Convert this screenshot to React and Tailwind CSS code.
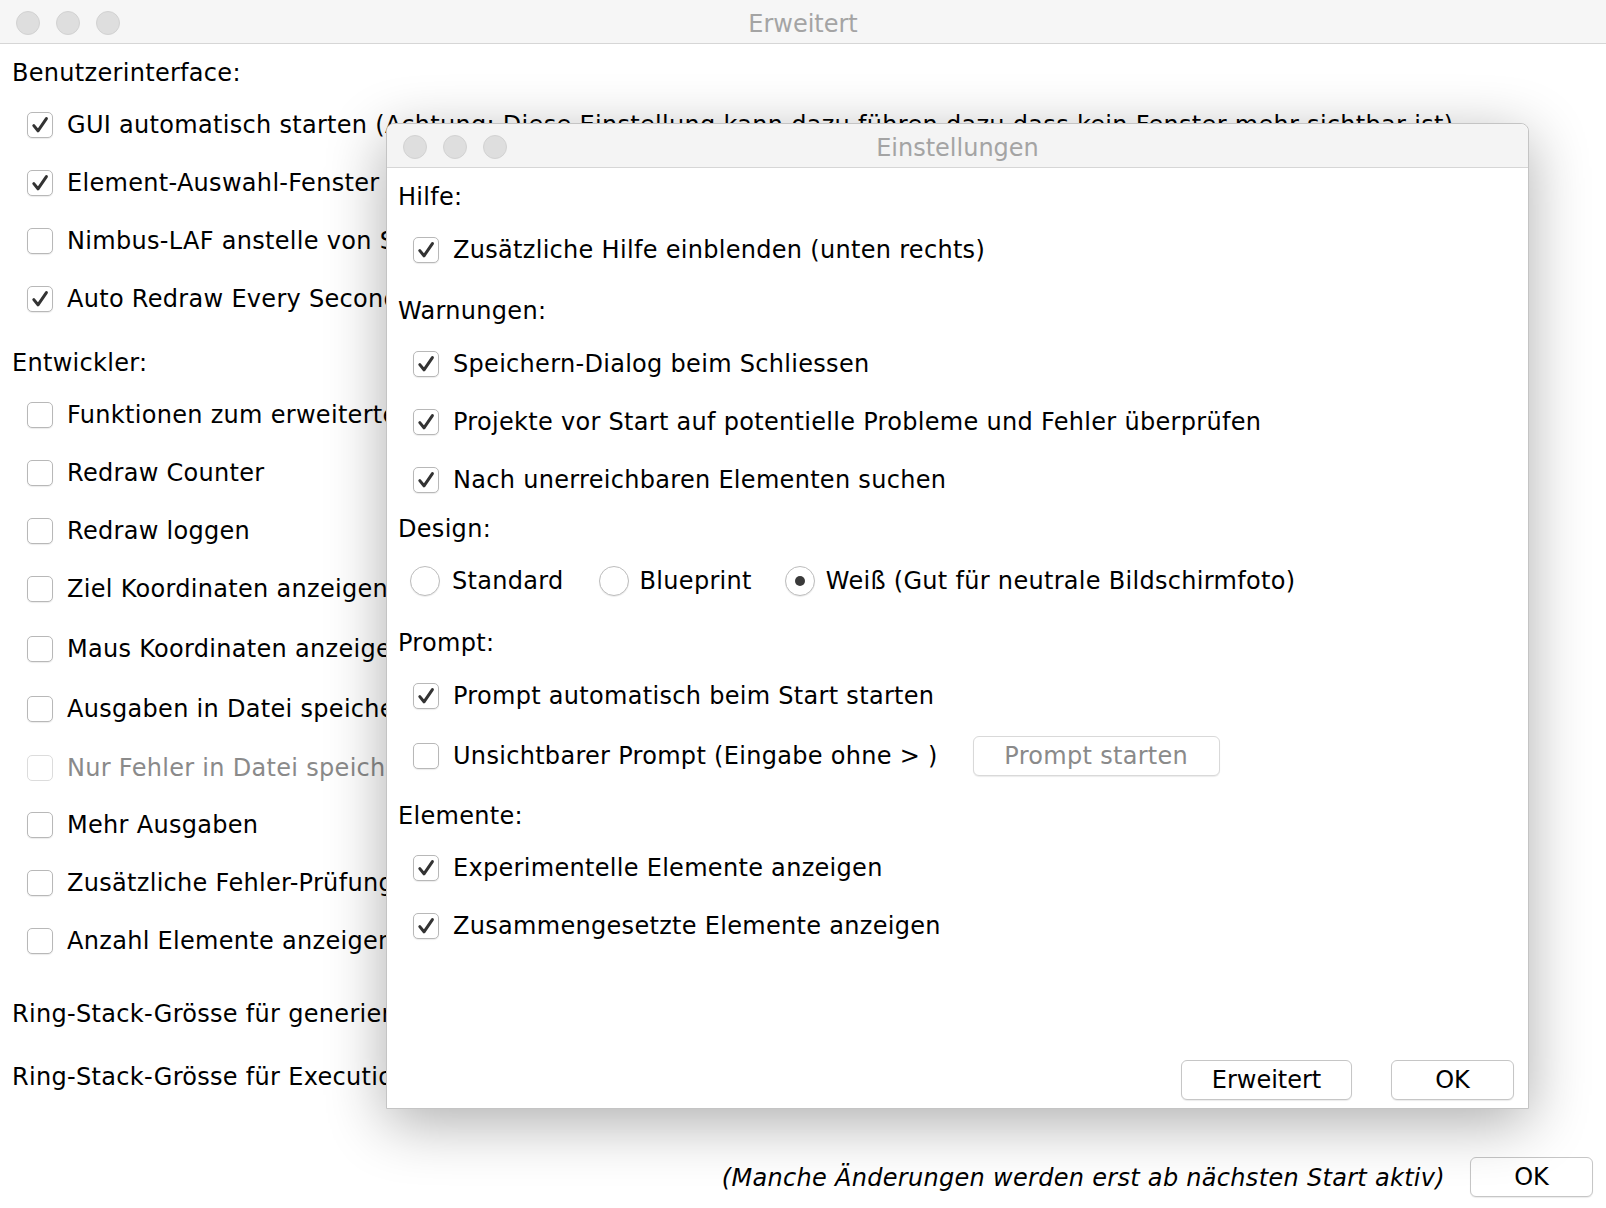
import React from "react";

function Check({ checked, disabled }) {
  return (
    <span
      className={
        disabled
          ? "w-[26px] h-[26px] rounded-[5px] border border-[#dcdcdc] bg-white flex items-center justify-center shrink-0"
          : "w-[26px] h-[26px] rounded-[5px] border border-[#b8b8b8] bg-white shadow-[0_1px_1px_rgba(0,0,0,0.08)] flex items-center justify-center shrink-0"
      }
    >
      {checked && (
        <svg width="26" height="26" viewBox="0 0 26 26" className="-m-px">
          <path
            d="M6.8 13.6 L11 18.8 L19.4 6.6"
            fill="none"
            stroke="#333333"
            strokeWidth="3"
            strokeLinecap="round"
            strokeLinejoin="round"
          />
        </svg>
      )}
    </span>
  );
}

function Row({ checked, disabled, className, children }) {
  return (
    <div className={"flex items-center pl-[15px] whitespace-nowrap " + className}>
      <Check checked={checked} disabled={disabled} />
      <span className={disabled ? "ml-[14px] text-[#8a8a8a]" : "ml-[14px]"}>{children}</span>
    </div>
  );
}

function Radio({ selected }) {
  return (
    <span className="w-[30px] h-[30px] rounded-full border border-[#bdbdbd] bg-white shadow-[0_1px_1px_rgba(0,0,0,0.08)] flex items-center justify-center shrink-0">
      {selected && <span className="w-[10px] h-[10px] rounded-full bg-[#3a3a3a]" />}
    </span>
  );
}

function TitleBar({ title, rounded }) {
  return (
    <div
      className={
        rounded
          ? "relative h-[44px] shrink-0 bg-[#f4f4f4] border-b border-[#d6d6d6] rounded-t-[8px] flex items-center pl-[16px] pt-[2px] gap-[16px] tracking-normal"
          : "relative h-[44px] shrink-0 bg-[#f6f6f6] border-b border-[#d6d6d6] flex items-center pl-[16px] pt-[2px] gap-[16px] tracking-normal"
      }
    >
      <span className="w-[24px] h-[24px] rounded-full bg-[#dedede] border border-[#d2d2d2]" />
      <span className="w-[24px] h-[24px] rounded-full bg-[#dedede] border border-[#d2d2d2]" />
      <span className="w-[24px] h-[24px] rounded-full bg-[#dedede] border border-[#d2d2d2]" />
      <div className="absolute inset-0 pt-[4px] flex items-center justify-center text-[#a4a4a4] pointer-events-none">
        {title}
      </div>
    </div>
  );
}

function Btn({ className, children, gray }) {
  return (
    <div
      className={
        (gray ? "text-[#8a8a8a] border-[#d9d9d9] " : "text-black border-[#c6c6c6] ") +
        "h-[40px] bg-white border rounded-[6px] shadow-[0_1px_1px_rgba(0,0,0,0.08)] flex items-center justify-center " +
        className
      }
    >
      {children}
    </div>
  );
}

export default function App() {
  return (
    <div className="relative w-[1606px] h-[1208px] bg-white overflow-hidden font-['DejaVu_Sans',sans-serif] text-[24px] tracking-[0.3px] text-black">
      <TitleBar title="Erweitert" />
      <div className="pl-[12px]">
        <div className="mt-[14px] mb-[8px] h-[30px] leading-[30px]">Benutzerinterface:</div>
        <Row checked className="h-[58px]">
          GUI automatisch starten (Achtung: Diese Einstellung kann dazu führen dazu dass kein Fenster mehr sichtbar ist)
        </Row>
        <Row checked className="h-[58px]">Element-Auswahl-Fenster automatisch öffnen</Row>
        <Row className="h-[58px]">Nimbus-LAF anstelle von System-LAF</Row>
        <Row checked className="h-[58px]">Auto Redraw Every Second</Row>
        <div className="mt-[20px] mb-[8px] h-[30px] leading-[30px]">Entwickler:</div>
        <Row className="h-[58px]">Funktionen zum erweiterten Debuggen</Row>
        <Row className="h-[58px]">Redraw Counter</Row>
        <Row className="h-[58px]">Redraw loggen</Row>
        <Row className="h-[58px]">Ziel Koordinaten anzeigen</Row>
        <Row className="h-[61px]">Maus Koordinaten anzeigen</Row>
        <Row className="h-[60px]">Ausgaben in Datei speichern</Row>
        <Row disabled className="h-[57px]">Nur Fehler in Datei speichern</Row>
        <Row className="h-[58px]">Mehr Ausgaben</Row>
        <Row className="h-[58px]">Zusätzliche Fehler-Prüfung</Row>
        <Row className="h-[58px]">Anzahl Elemente anzeigen</Row>
        <div className="mt-[29px] h-[30px] leading-[30px] whitespace-nowrap">Ring-Stack-Grösse für generierten Code</div>
        <div className="mt-[33px] h-[30px] leading-[30px] whitespace-nowrap">Ring-Stack-Grösse für Execution</div>
      </div>
      <div className="mt-[65px] flex items-center justify-end pr-[13px]">
        <span className="italic pt-[2px]">(Manche Änderungen werden erst ab nächsten Start aktiv)</span>
        <Btn className="ml-[25px] w-[123px] tracking-normal">OK</Btn>
      </div>

      {/* Einstellungen dialog */}
      <div className="absolute left-[386px] top-[123px] w-[1143px] h-[986px] bg-white border border-[#c4c4c4] rounded-t-[8px] shadow-[0_14px_60px_rgba(0,0,0,0.32)] flex flex-col">
        <TitleBar title="Einstellungen" rounded />
        <div className="pl-[11px] flex flex-col">
          <div className="mt-[14px] h-[30px] leading-[30px]">Hilfe:</div>
          <Row checked className="mt-[9px] h-[58px]">Zusätzliche Hilfe einblenden (unten rechts)</Row>
          <div className="mt-[17px] h-[30px] leading-[30px]">Warnungen:</div>
          <Row checked className="mt-[9px] h-[58px]">Speichern-Dialog beim Schliessen</Row>
          <Row checked className="h-[58px]">Projekte vor Start auf potentielle Probleme und Fehler überprüfen</Row>
          <Row checked className="h-[58px]">Nach unerreichbaren Elementen suchen</Row>
          <div className="mt-[5px] h-[30px] leading-[30px]">Design:</div>
          <div className="mt-[12px] h-[50px] flex items-center pl-[12px] whitespace-nowrap">
            <Radio />
            <span className="ml-[12px]">Standard</span>
            <span className="ml-[35px]">
              <Radio />
            </span>
            <span className="ml-[11px]">Blueprint</span>
            <span className="ml-[33px]">
              <Radio selected />
            </span>
            <span className="ml-[11px]">Weiß (Gut für neutrale Bildschirmfoto)</span>
          </div>
          <div className="mt-[22px] h-[30px] leading-[30px]">Prompt:</div>
          <Row checked className="mt-[9px] h-[58px]">Prompt automatisch beim Start starten</Row>
          <div className="h-[62px] flex items-center">
            <Row className="h-[62px]">Unsichtbarer Prompt (Eingabe ohne &gt; )</Row>
            <Btn gray className="ml-[35px] w-[247px]">Prompt starten</Btn>
          </div>
          <div className="mt-[14px] h-[30px] leading-[30px]">Elemente:</div>
          <Row checked className="mt-[8px] h-[58px]">Experimentelle Elemente anzeigen</Row>
          <Row checked className="h-[58px]">Zusammengesetzte Elemente anzeigen</Row>
        </div>
        <div className="mt-auto mb-[8px] mr-[14px] flex justify-end">
          <Btn className="w-[171px] tracking-normal">Erweitert</Btn>
          <Btn className="ml-[39px] w-[123px] tracking-normal">OK</Btn>
        </div>
      </div>
    </div>
  );
}
